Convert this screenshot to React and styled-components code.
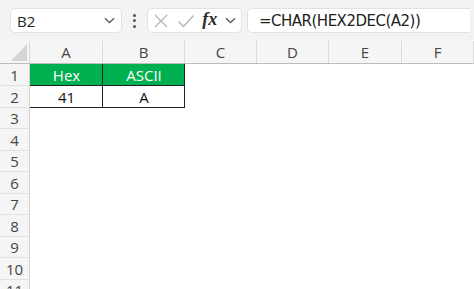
import styled, { createGlobalStyle } from "styled-components";

const GlobalStyle = createGlobalStyle`
  html, body {
    margin: 0;
    padding: 0;
    background: #ffffff;
    overflow: hidden;
  }
  body {
    font-family: "Open Sans", "Noto Sans", "Liberation Sans", sans-serif;
  }
`;

const columns = [
  { name: "A", width: 73 },
  { name: "B", width: 82 },
  { name: "C", width: 72 },
  { name: "D", width: 72 },
  { name: "E", width: 73 },
  { name: "F", width: 72 },
];

const rowHeights = [22, 22, 21, 22, 21, 22, 21, 22, 21, 22, 21];

const data = {
  1: { A: { text: "Hex", head: true }, B: { text: "ASCII", head: true } },
  2: { A: { text: "41", boxed: true }, B: { text: "A", boxed: true } },
};

const Chevron = () => (
  <svg width="11" height="7" viewBox="0 0 11 7">
    <path d="M1 1.2 L5.5 5.5 L10 1.2" fill="none" stroke="#5a5a5a" strokeWidth="1.3" />
  </svg>
);

const App = () => {
  return (
    <Page>
      <GlobalStyle />
      <TopBar>
        <NameBox>
          <span>B2</span>
          <Chevron />
        </NameBox>
        <Dots>
          <i />
          <i />
          <i />
        </Dots>
        <FxBox>
          <svg width="16" height="16" viewBox="0 0 16 16">
            <path d="M2 2 L14 14 M14 2 L2 14" stroke="#b4b4b4" strokeWidth="1.3" />
          </svg>
          <svg width="18" height="14" viewBox="0 0 18 14">
            <path d="M1.5 7.5 L6.5 12.5 L16.5 1.5" fill="none" stroke="#b4b4b4" strokeWidth="1.3" />
          </svg>
          <Fx>fx</Fx>
          <Chevron />
        </FxBox>
        <FormulaBox>=CHAR(HEX2DEC(A2))</FormulaBox>
      </TopBar>
      <Sheet>
        <HeaderRow>
          <Corner>
            <svg width="16" height="17" viewBox="0 0 16 17">
              <path d="M16 0 L16 17 L0 17 Z" fill="#d4d4d4" />
            </svg>
          </Corner>
          {columns.map((c) => (
            <ColHead key={c.name} $w={c.width}>
              {c.name}
            </ColHead>
          ))}
        </HeaderRow>
        {rowHeights.map((h, i) => {
          const r = i + 1;
          return (
            <Row key={r} $h={h}>
              <RowHead>{r}</RowHead>
              {columns.map((c) => {
                const cell = data[r] && data[r][c.name];
                return (
                  <Cell key={c.name} $w={c.width} $head={cell && cell.head} $boxed={!!cell}>
                    {cell ? cell.text : ""}
                  </Cell>
                );
              })}
            </Row>
          );
        })}
      </Sheet>
    </Page>
  );
};

const Page = styled.div`
  width: 474px;
  height: 289px;
  overflow: hidden;
`;

const TopBar = styled.div`
  height: 41px;
  background: #f3f3f3;
  display: flex;
  align-items: center;
  padding: 0 4px 0 10px;
  box-sizing: border-box;
`;

const Box = styled.div`
  height: 25px;
  box-sizing: border-box;
  background: #ffffff;
  border: 1px solid #e1e1e1;
  border-radius: 5px;
  display: flex;
  align-items: center;
`;

const NameBox = styled(Box)`
  width: 112px;
  padding: 0 6px 0 6px;
  justify-content: space-between;
  font-size: 15px;
  color: #222;
`;

const Dots = styled.div`
  width: 25px;
  display: flex;
  flex-direction: column;
  align-items: center;
  gap: 2.5px;
  i {
    width: 3px;
    height: 3px;
    border-radius: 50%;
    background: #555;
  }
`;

const FxBox = styled(Box)`
  width: 95px;
  padding: 0 5px 0 5px;
  justify-content: space-between;
`;

const Fx = styled.span`
  font-family: "Liberation Serif", "DejaVu Serif", serif;
  font-style: italic;
  font-weight: bold;
  font-size: 18px;
  color: #2a2a2a;
  margin-top: -2px;
`;

const FormulaBox = styled(Box)`
  flex: 1;
  margin-left: 5px;
  padding-left: 11px;
  font-family: "DejaVu Sans", "Noto Sans", sans-serif;
  font-size: 15px;
  letter-spacing: -0.5px;
  color: #222;
  border-right: none;
  border-radius: 5px 0 0 5px;
`;

const Sheet = styled.div`
  display: flex;
  flex-direction: column;
`;

const HeaderRow = styled.div`
  display: flex;
  height: 22px;
  background: #f5f5f5;
  border-bottom: 1px solid #bcbcbc;
  box-sizing: content-box;
`;

const Corner = styled.div`
  width: 30px;
  display: flex;
  align-items: flex-end;
  justify-content: flex-end;
  padding: 0 2px 2px 0;
  box-sizing: border-box;
  border-right: 1px solid #dadada;
`;

const ColHead = styled.div`
  width: ${(p) => p.$w}px;
  box-sizing: border-box;
  border-right: 1px solid #dadada;
  display: flex;
  align-items: center;
  justify-content: center;
  font-size: 15px;
  color: #444;
`;

const Row = styled.div`
  display: flex;
  height: ${(p) => p.$h}px;
`;

const RowHead = styled.div`
  width: 30px;
  box-sizing: border-box;
  background: #f5f5f5;
  border-right: 1px solid #d0d0d0;
  border-bottom: 1px solid #e2e2e2;
  display: flex;
  align-items: center;
  justify-content: center;
  font-size: 15px;
  color: #444;
`;

const Cell = styled.div`
  width: ${(p) => p.$w}px;
  box-sizing: border-box;
  display: flex;
  align-items: center;
  justify-content: center;
  font-size: 15px;
  background: ${(p) => (p.$head ? "#00b050" : "#ffffff")};
  color: ${(p) => (p.$head ? "#ffffff" : "#111")};
  box-shadow: ${(p) => (p.$boxed ? "inset -1px -1px 0 #222" : "none")};
`;

export default App;
